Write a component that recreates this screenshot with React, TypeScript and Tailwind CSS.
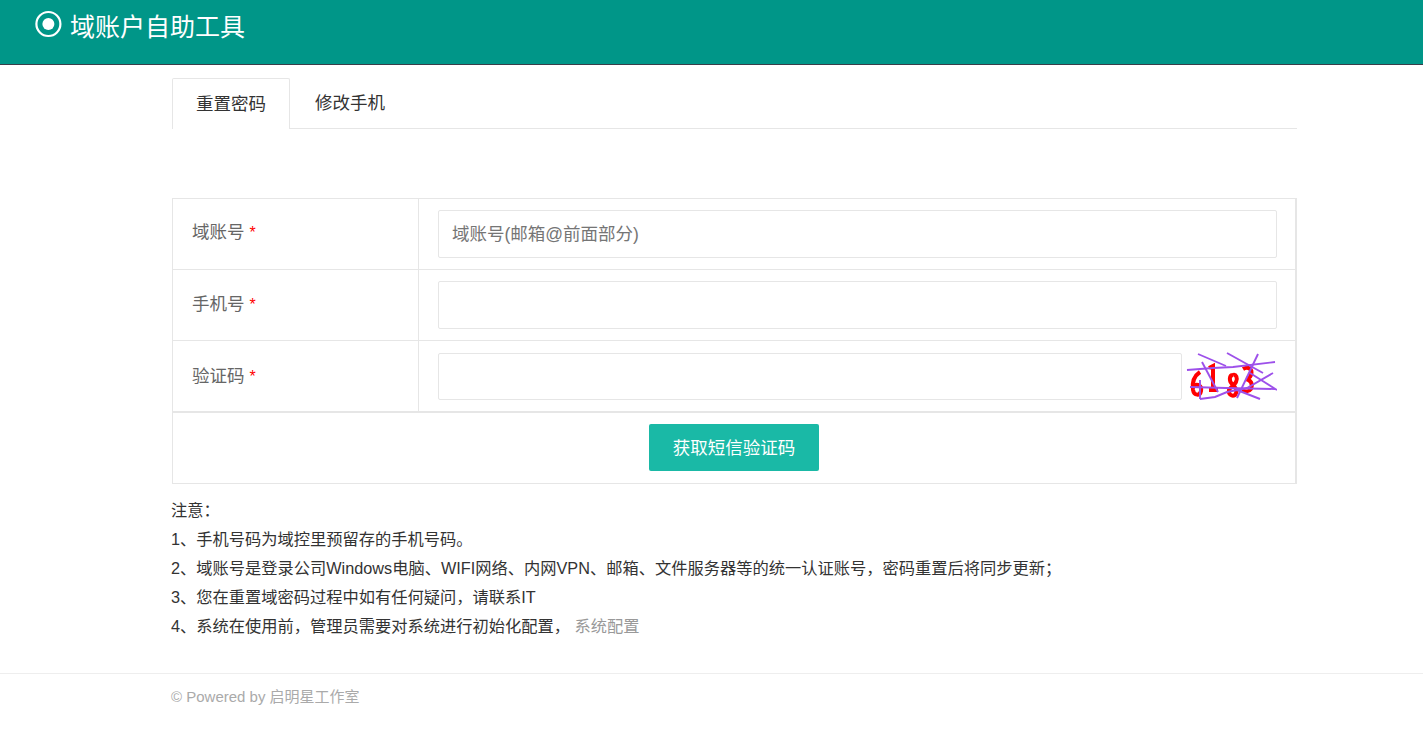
const FONT = "font-['Liberation_Sans','Noto_Sans_CJK_SC',sans-serif]";

function Row({ label, placeholder, captcha, labelPad }: { label: string; placeholder?: string; captcha?: boolean; labelPad: string }) {
  return (
    <div className="flex h-[71px] border-b border-[#e6e6e6]">
      <div className={`w-[246px] shrink-0 border-r border-[#e6e6e6] pl-[19px] ${labelPad} text-[17.5px] leading-[24px] text-[#666]`}>
        {label} <span className="text-[16px] text-[#ff0000]">*</span>
      </div>
      <div className={`flex flex-1 items-start gap-[4px] pl-[19px] pr-[18px] ${captcha ? "pt-[12px]" : "pt-[11px]"}`}>
        <input
          placeholder={placeholder}
          className={`${captcha ? "h-[47px]" : "h-[48px]"} min-w-0 flex-1 rounded-[2px] border border-[#e6e6e6] bg-white px-[13px] text-[17.5px] text-[#666] outline-none placeholder:text-[#757575]`}
        />
        {captcha && <Captcha />}
      </div>
    </div>
  );
}

function Captcha() {
  return (
    <svg width="91" height="48" viewBox="0 0 91 48" className="-mt-[1px] shrink-0">
      <g stroke="#ff0000" strokeWidth="4" fill="none">
        <path d="M14 20 C8 24 6 31 7 38 C8 44 14 44 15 39 C16 34 12 31 7 34" />
        <path d="M23 16 L27 14 L27 37 M23 38 L32 38" />
        <path d="M47 23 C43 23 43 29 46 32 C50 35 52 39 49 43 C46 45 42 42 43 38 C44 35 48 34 50 30 C52 26 50 22 47 23" />
        <path d="M57 17 C62 14 67 17 65 23 C64 26 61 27 60 27 C65 28 67 32 65 37 C63 40 59 40 56 38" />
      </g>
      <g stroke="#9d50ea" strokeWidth="1.9" fill="none">
        <path d="M1 18 L27 16 L47 15 L89 10" />
        <path d="M12 2 L40 14" />
        <path d="M41 1 L77 21" />
        <path d="M72 2 L51 46" />
        <path d="M16 10 L32 40" />
        <path d="M4 35 L40 36 L89 37" />
        <path d="M14 47 L29 45 L41 40 L61 36 L87 21" />
        <path d="M51 38 L74 47" />
        <path d="M64 21 L91 38" />
        <path d="M14 28 L14 47" />
      </g>
    </svg>
  );
}

export default function App() {
  return (
    <div className={`${FONT} min-h-[744px] bg-white`}>
      <header className="flex h-[65px] items-start border-b border-[#393d49] bg-[#009688] pl-[35px] pt-[10px] text-white">
        <svg width="28" height="28" viewBox="0 0 28 28" className="mr-[7px] shrink-0">
          <circle cx="13.4" cy="14" r="12" fill="none" stroke="white" strokeWidth="2.2" />
          <circle cx="13.4" cy="14" r="6" fill="white" />
        </svg>
        <span className="text-[25px] leading-[34px]">域账户自助工具</span>
      </header>

      <main className="ml-[172px] w-[1125px] pt-[13px]">
        <div className="flex h-[51px] border-b border-[#e6e6e6] text-[17.5px] leading-[50px] text-[#333]">
          <div className="h-[51px] w-[118px] rounded-t-[2px] border-x border-t border-[#e6e6e6] bg-white text-center">
            重置密码
          </div>
          <div className="w-[120px] text-center">修改手机</div>
        </div>

        <div className="mt-[69px] h-[286px] border-y border-l border-r-2 border-[#e6e6e6]">
          <Row label="域账号" labelPad="pt-[21px]" placeholder="域账号(邮箱@前面部分)" />
          <Row label="手机号" labelPad="pt-[22px]" />
          <Row label="验证码" labelPad="pt-[23px]" captcha />
          <div className="flex justify-center border-t border-[#e6e6e6] pt-[11px]">
            <button className="h-[47px] w-[170px] rounded-[2px] bg-[#1ab9a6] pt-[1px] text-[17.5px] text-white">
              获取短信验证码
            </button>
          </div>
        </div>

        <div className="-ml-[1px] mt-[12px] text-[16.25px] leading-[29px] text-[#333]">
          <p>注意：</p>
          <p>1、手机号码为域控里预留存的手机号码。</p>
          <p>2、域账号是登录公司Windows电脑、WIFI网络、内网VPN、邮箱、文件服务器等的统一认证账号，密码重置后将同步更新；</p>
          <p>3、您在重置域密码过程中如有任何疑问，请联系IT</p>
          <p>
            4、系统在使用前，管理员需要对系统进行初始化配置， <a className="text-[#999]">系统配置</a>
          </p>
        </div>
      </main>

      <footer className="mt-[32px] border-t border-[#eeeeee] pl-[171px] pt-[12px] text-[15px] leading-[22px] text-[#aaa]">
        © Powered by 启明星工作室
      </footer>
    </div>
  );
}
